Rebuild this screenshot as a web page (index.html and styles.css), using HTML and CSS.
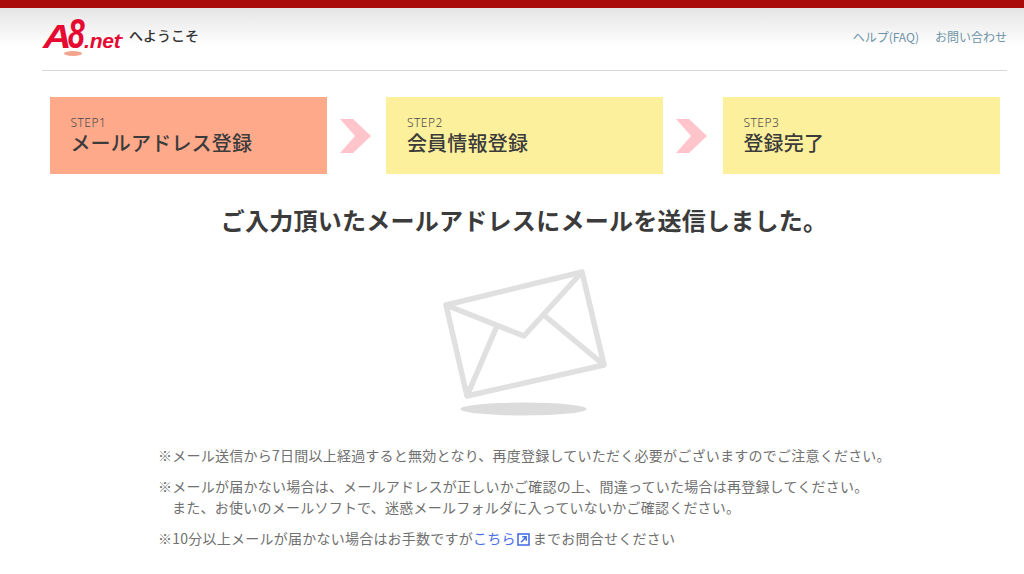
FILE: index.html
```html
<!DOCTYPE html>
<html lang="ja">
<head>
<meta charset="utf-8">
<title>A8.net</title>
<link rel="stylesheet" href="styles.css">
</head>
<body>
<header class="header">
  <div class="header-inner">
    <div class="brand">
      <span class="logo"><span class="logo-a">A</span><span class="logo-8">8</span><span class="logo-net">.net</span><span class="logo-dot"></span><span class="logo-shadow"></span></span>
      <span class="welcome">へようこそ</span>
    </div>
    <nav class="links"><a>ヘルプ(FAQ)</a><a>お問い合わせ</a></nav>
  </div>
</header>
<ol class="steps">
  <li class="step step-active"><small>STEP1</small><strong>メールアドレス登録</strong></li>
  <li class="arrow"><svg width="31" height="34" viewBox="0 0 31 34"><path d="M0 0H13L31 17L13 34H0L15 17Z" fill="#ffc5cb"/></svg></li>
  <li class="step"><small>STEP2</small><strong>会員情報登録</strong></li>
  <li class="arrow"><svg width="31" height="34" viewBox="0 0 31 34"><path d="M0 0H13L31 17L13 34H0L15 17Z" fill="#ffc5cb"/></svg></li>
  <li class="step"><small>STEP3</small><strong>登録完了</strong></li>
</ol>
<h1 class="title">ご入力頂いたメールアドレスにメールを送信しました。</h1>
<div class="mail">
  <svg width="170" height="148" viewBox="0 0 170 148">
    <g fill="none" stroke="#e0e0e0" stroke-width="5.5" stroke-linejoin="round">
      <path d="M7 37L143 4L165 97L28 128Z"/>
      <path d="M7 37L85 68L143 4"/>
      <path d="M58 58L28 128"/>
      <path d="M106 48L165 97"/>
    </g>
    <ellipse cx="84.5" cy="141" rx="63" ry="6.5" fill="#dcdcdc"/>
  </svg>
</div>
<div class="notes">
  <p>※メール送信から7日間以上経過すると無効となり、再度登録していただく必要がございますのでご注意ください。</p>
  <p>※メールが届かない場合は、メールアドレスが正しいかご確認の上、間違っていた場合は再登録してください。<br><span class="indent">また、お使いのメールソフトで、迷惑メールフォルダに入っていないかご確認ください。</span></p>
  <p>※10分以上メールが届かない場合はお手数ですが<a class="link">こちら<svg class="ext" width="13" height="13" viewBox="0 0 13 13"><rect x="1" y="1" width="11" height="11" fill="none" stroke="#4a70e6" stroke-width="1.6"/><path d="M4 9.2L8.8 4.4M5.2 3.8H9.2V7.8" fill="none" stroke="#4a70e6" stroke-width="1.5"/></svg></a>までお問合せください</p>
</div>
</body>
</html>
```
FILE: styles.css
```css
* { box-sizing: border-box; }
html, body { margin: 0; padding: 0; }
body {
  height: 574px;
  overflow: hidden;
  background: #fff;
  color: #444;
  font-family: "Noto Sans CJK JP", "Noto Sans", sans-serif;
}
.header {
  height: 71px;
  border-top: 8px solid #a90a0a;
  background: linear-gradient(#e5e5e5, #fff 38px);
  padding: 0 17px 0 42px;
}
.header-inner {
  height: 63px;
  border-bottom: 1px solid #d8d8d8;
  display: flex;
  justify-content: space-between;
  align-items: flex-start;
}
.brand { display: flex; align-items: flex-start; padding-top: 8px; }
.logo {
  position: relative;
  display: block;
  width: 87px;
  height: 40px;
  color: #e60a32;
  font-family: "Liberation Sans", sans-serif;
  font-weight: 700;
  font-style: italic;
}
.logo-a, .logo-8, .logo-net { position: absolute; line-height: 1; transform-origin: left bottom; }
.logo-a { left: 1px; top: 4px; font-size: 33px; transform: scaleX(1.2); }
.logo-8 { left: 26px; top: -4px; font-size: 43px; transform: scaleX(.7); }
.logo-net { left: 42px; top: 14px; font-size: 21px; letter-spacing: -.2px; }
.logo-dot { position: absolute; left: 79px; top: 21px; width: 2px; height: 2px; border-radius: 50%; background: #e60a32; }
.logo-shadow {
  position: absolute;
  left: 22px;
  top: 35px;
  width: 18px;
  height: 5px;
  border-radius: 50%;
  background: #f2a48c;
}
.welcome { font-size: 14px; line-height: 20px; color: #333; font-weight: 500; margin-top: 9px; }
.links { display: flex; gap: 16px; font-size: 12px; line-height: 18px; color: #6d94a6; padding-top: 20px; }
.steps {
  list-style: none;
  margin: 26px 0 0;
  padding: 0 0 0 49.6px;
  display: flex;
}
.step {
  width: 277px;
  height: 77px;
  background: #fdf09c;
  padding: 19px 20px 0 20.8px;
  display: flex;
  flex-direction: column;
}
.step-active { background: #ffa98b; }
.step small { font-size: 12px; line-height: 14px; color: #4a4a4a; letter-spacing: .5px; font-family: "Noto Sans", sans-serif; font-weight: 300; }
.step strong { font-size: 20px; line-height: 24px; font-weight: 500; color: #3b3b3b; margin-top: 1px; letter-spacing: .2px; }
.arrow { width: 59.5px; height: 77px; display: flex; align-items: center; padding-left: 13.4px; }
.title {
  margin: 30px 0 0;
  padding-left: 24px;
  text-align: center;
  font-size: 24px;
  line-height: 32px;
  font-weight: 700;
  letter-spacing: .26px;
  color: #3b3b3b;
}
.mail { display: flex; justify-content: center; margin-top: 32px; padding-left: 24px; }
.notes { margin: 29px 0 0 158px; font-size: 14px; line-height: 21px; color: #707070; letter-spacing: .24px; }
.notes p { margin: 0 0 10px; }
.indent { padding-left: 14px; }
.link { color: #4a70e6; }
.ext { vertical-align: -2px; margin: 0 3px 0 1px; }
```
